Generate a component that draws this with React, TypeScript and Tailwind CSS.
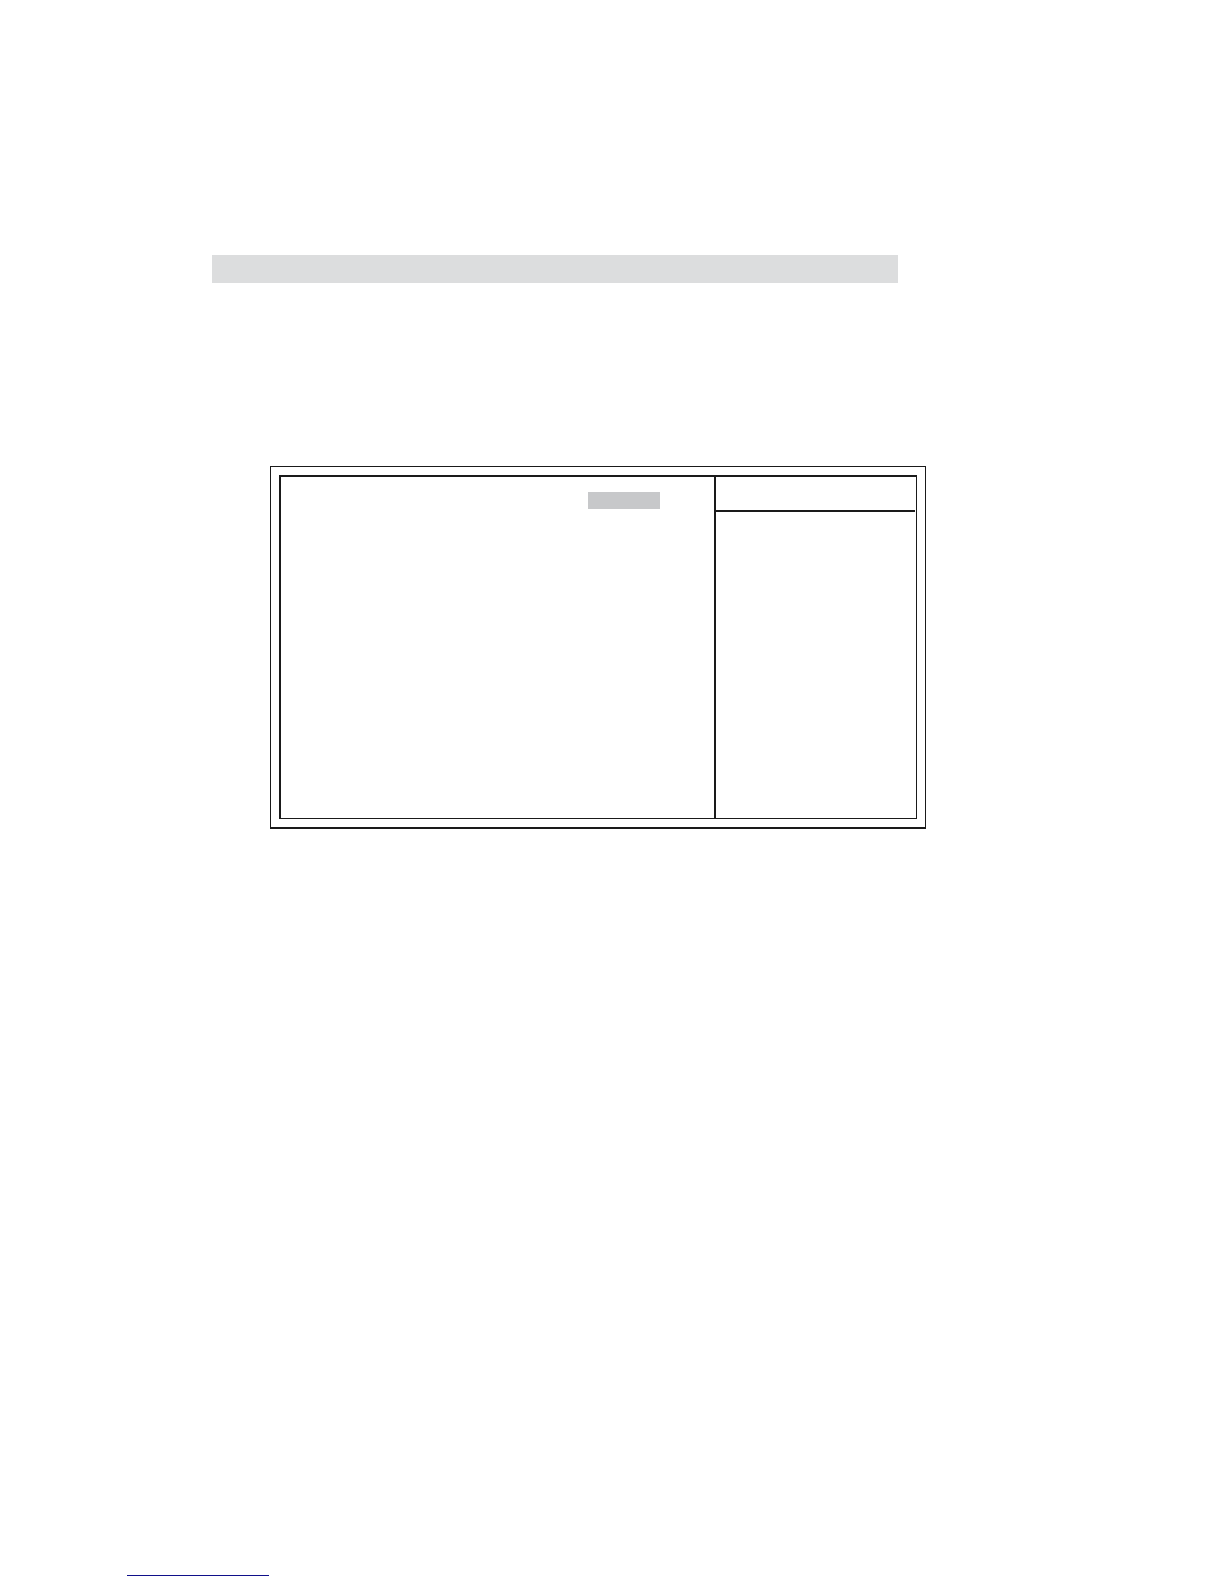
function TitleBar() {
    return <div className="w-full max-w-[686px] h-7 bg-[#dcddde]" />;
}

function OptionsPane() {
    return (
        <section className="flex-1 flex justify-end items-start pt-[15px] pr-[54px]">
            <div className="w-[72px] h-[17px] bg-[#c7c8ca]" />
        </section>
    );
}

function HelpPane() {
    return (
        <aside className="w-[202px] shrink-0 border-l-2 border-[#1a1a1a]">
            <div className="h-[35px] mr-px border-b-2 border-[#1a1a1a]" />
        </aside>
    );
}

function SetupScreen() {
    return (
        <div className="w-full max-w-[656px] p-2 border border-b-2 border-[#1a1a1a]">
            <div className="flex min-h-[344px] border border-t-2 border-l-2 border-[#1a1a1a]">
                <OptionsPane />
                <HelpPane />
            </div>
        </div>
    );
}

export default function App() {
    return (
        <div className="min-h-screen flex flex-col bg-white">
            <main className="pt-[255px] pl-[212px] pr-6">
                <TitleBar />
                <div className="mt-[183px] pl-[58px]">
                    <SetupScreen />
                </div>
            </main>
            <footer className="mt-auto pb-2 pl-[127px]">
                <div className="w-[142px] h-px bg-[#10108a]" />
            </footer>
        </div>
    );
}
